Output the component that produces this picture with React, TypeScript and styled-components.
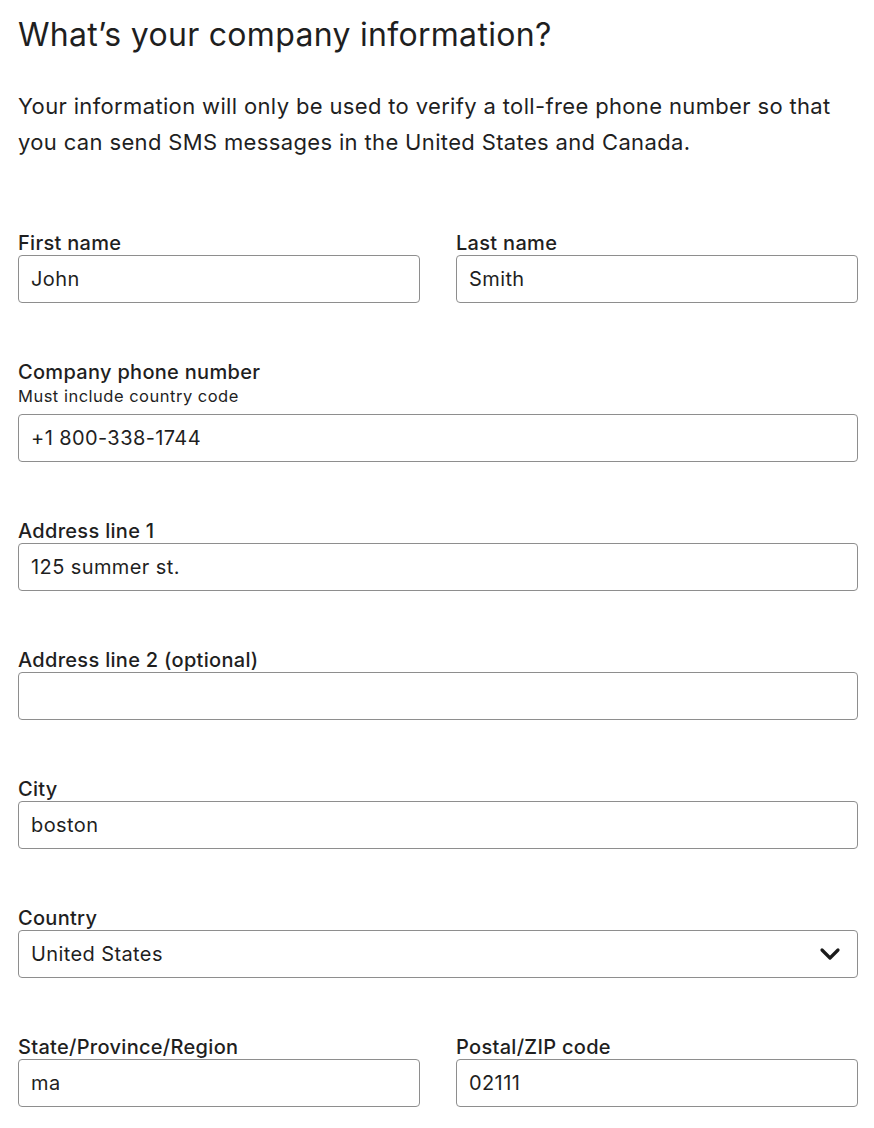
import styled, { createGlobalStyle } from "styled-components";

const GlobalStyle = createGlobalStyle`
  body {
    margin: 0;
    background: #ffffff;
    font-family: Inter, "Noto Sans", sans-serif;
    color: #1f1f1f;
  }
`;

const Page = styled.main`
  width: 840px;
  padding: 15px 0 0 18px;
`;

const Title = styled.h1`
  margin: 0;
  font-size: 32px;
  line-height: 40px;
  font-weight: 400;
  letter-spacing: 0.3px;
`;

const Intro = styled.p`
  margin: 33px 0 0;
  font-size: 22px;
  line-height: 36px;
  font-weight: 400;
  letter-spacing: 0.35px;
`;

const Form = styled.form`
  display: flex;
  flex-direction: column;
  gap: 57px;
  margin-top: 71px;
`;

const Row = styled.div`
  display: grid;
  grid-template-columns: 1fr 1fr;
  column-gap: 36px;
`;

const Field = styled.label`
  display: flex;
  flex-direction: column;
`;

const Label = styled.span`
  font-size: 20px;
  line-height: 24px;
  font-weight: 500;
  letter-spacing: 0.3px;
`;

const Hint = styled.span`
  font-size: 16.5px;
  line-height: 20px;
  letter-spacing: 0.5px;
  margin: 2px 0 8px;
`;

const Input = styled.input`
  box-sizing: border-box;
  width: 100%;
  height: 48px;
  padding: 0 12px;
  border: 1px solid #8e8e8e;
  border-radius: 4px;
  font-family: inherit;
  font-size: 20px;
  letter-spacing: 0.4px;
  color: #1f1f1f;
  background: #fff;
  outline: none;
`;

const SelectBox = styled.div`
  box-sizing: border-box;
  height: 48px;
  padding: 0 16px 0 12px;
  border: 1px solid #8e8e8e;
  border-radius: 4px;
  display: flex;
  align-items: center;
  justify-content: space-between;
  font-size: 20px;
  letter-spacing: 0.4px;
`;

const Chevron = () => (
  <svg width="22" height="14" viewBox="0 0 22 14" fill="none">
    <path d="M3 3l8 8 8-8" stroke="#1a1a1a" strokeWidth="3.2" strokeLinecap="round" strokeLinejoin="round" />
  </svg>
);

const TextField = ({ label, hint, value }: { label: string; hint?: string; value: string }) => (
  <Field>
    <Label>{label}</Label>
    {hint && <Hint>{hint}</Hint>}
    <Input defaultValue={value} />
  </Field>
);

export default function App() {
  return (
    <Page>
      <GlobalStyle />
      <Title>What’s your company information?</Title>
      <Intro>
        Your information will only be used to verify a toll-free phone number so that
        you can send SMS messages in the United States and Canada.
      </Intro>
      <Form onSubmit={(e) => e.preventDefault()}>
        <Row>
          <TextField label="First name" value="John" />
          <TextField label="Last name" value="Smith" />
        </Row>
        <TextField label="Company phone number" hint="Must include country code" value="+1 800-338-1744" />
        <TextField label="Address line 1" value="125 summer st." />
        <TextField label="Address line 2 (optional)" value="" />
        <TextField label="City" value="boston" />
        <Field as="div">
          <Label>Country</Label>
          <SelectBox>
            <span>United States</span>
            <Chevron />
          </SelectBox>
        </Field>
        <Row>
          <TextField label="State/Province/Region" value="ma" />
          <TextField label="Postal/ZIP code" value="02111" />
        </Row>
      </Form>
    </Page>
  );
}
